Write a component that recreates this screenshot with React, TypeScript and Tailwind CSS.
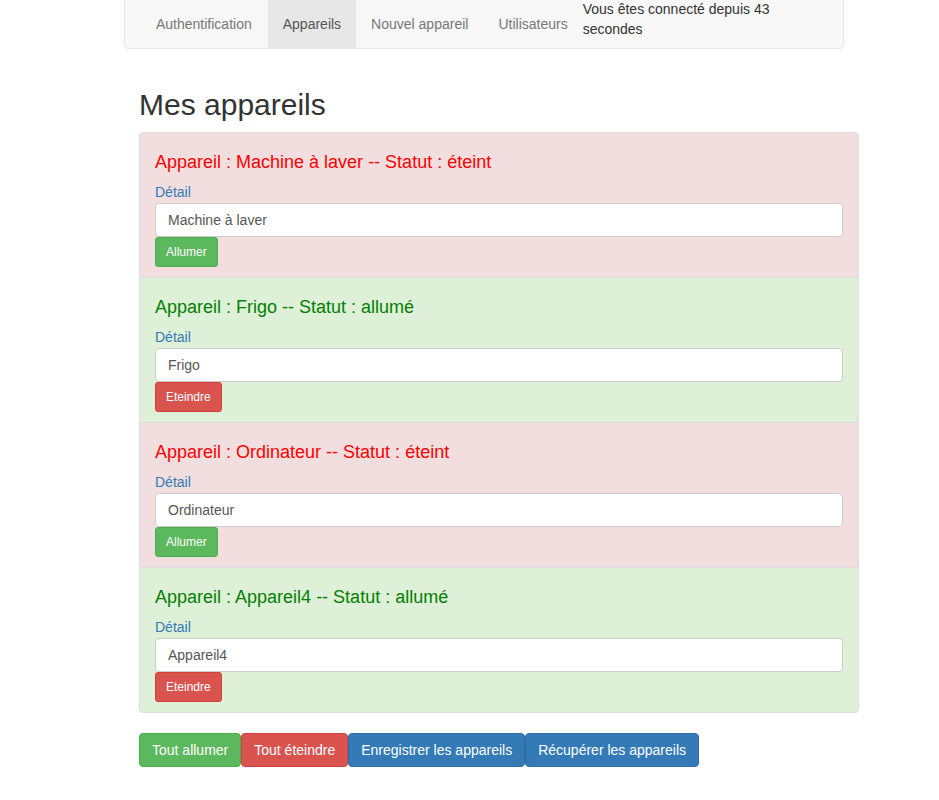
import React from 'react';

type Appareil = { name: string; on: boolean };

const appareils: Appareil[] = [
  { name: 'Machine à laver', on: false },
  { name: 'Frigo', on: true },
  { name: 'Ordinateur', on: false },
  { name: 'Appareil4', on: true },
];

function NavBar() {
  return (
    <div className="ml-[124px] w-[720px] h-[50px] mt-[-1px] bg-[#f8f8f8] border border-[#e7e7e7] rounded-b flex items-stretch pl-[15px]">
      <ul className="flex items-stretch text-[#777]">
        <li className="pl-[16px] pr-[16px] flex items-center">Authentification</li>
        <li className="px-[15px] flex items-center bg-[#e7e7e7] text-[#555]">Appareils</li>
        <li className="px-[15px] flex items-center">Nouvel appareil</li>
        <li className="px-[15px] flex items-center">Utilisateurs</li>
      </ul>
      <p className="w-[200px] text-[#333] -mt-[1px]">Vous êtes connecté depuis 43 secondes</p>
    </div>
  );
}

function Item({ a, index, last }: { a: Appareil; index: number; last: boolean }) {
  return (
    <li
      className={
        'px-[15px] py-[10px] border border-[#ddd] ' +
        (a.on ? 'bg-[#dff0d8] ' : 'bg-[#f2dede] ') +
        (index === 0 ? 'rounded-t ' : '-mt-px ') +
        (last ? 'rounded-b' : '')
      }
    >
      <h4 className={'text-[18px] leading-[20px] mt-[9px] mb-[10px] ' + (a.on ? 'text-[#008000]' : 'text-[#ff0000]')}>
        Appareil : {a.name} -- Statut : {a.on ? 'allumé' : 'éteint'}
      </h4>
      <label className="block text-[#337ab7] leading-[21px]">Détail</label>
      <input
        readOnly
        value={a.name}
        className="block w-full h-[34px] px-[12px] bg-white border border-[#ccc] rounded text-[#555] outline-none"
      />
      {a.on ? (
        <button className="h-[30px] px-[10px] text-[12px] text-white bg-[#d9534f] border border-[#d43f3a] rounded-[3px]">Eteindre</button>
      ) : (
        <button className="h-[30px] px-[10px] text-[12px] text-white bg-[#5cb85c] border border-[#4cae4c] rounded-[3px]">Allumer</button>
      )}
    </li>
  );
}

export default function App() {
  return (
    <div className="min-h-[800px] bg-white text-[14px] leading-[20px] text-[#333]" style={{ fontFamily: '"Liberation Sans", Arial, sans-serif' }}>
      <NavBar />
      <div className="ml-[139px] w-[720px]">
        <h2 className="text-[30px] leading-[33px] mt-[39px] mb-[11px]">Mes appareils</h2>
        <ul>
          {appareils.map((a, i) => (
            <Item key={a.name} a={a} index={i} last={i === appareils.length - 1} />
          ))}
        </ul>
        <div className="mt-[20px] flex">
          <button className="h-[34px] px-[12px] text-white bg-[#5cb85c] border border-[#4cae4c] rounded">Tout allumer</button>
          <button className="h-[34px] px-[12px] text-white bg-[#d9534f] border border-[#d43f3a] rounded">Tout éteindre</button>
          <button className="h-[34px] px-[12px] text-white bg-[#337ab7] border border-[#2e6da4] rounded">Enregistrer les appareils</button>
          <button className="h-[34px] px-[12px] text-white bg-[#337ab7] border border-[#2e6da4] rounded">Récupérer les appareils</button>
        </div>
      </div>
    </div>
  );
}
